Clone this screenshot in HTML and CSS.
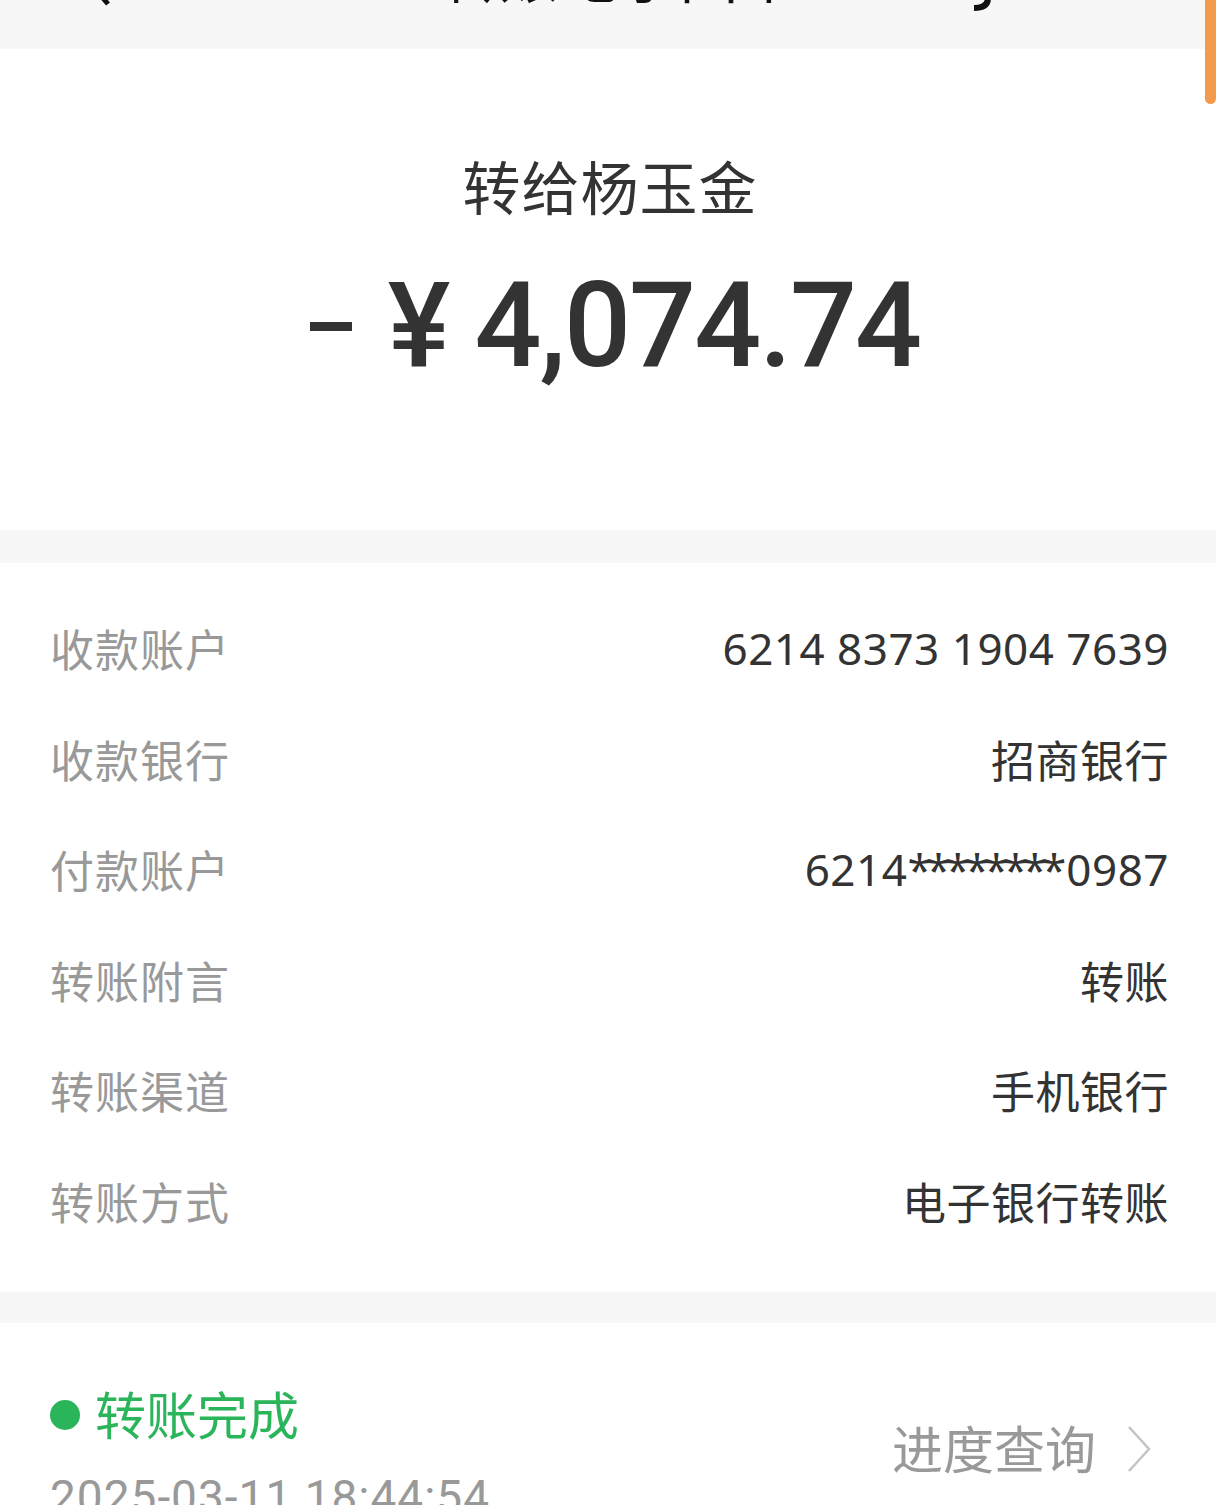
FILE: index.html
```html
<!DOCTYPE html>
<html lang="zh-CN">
<head>
<meta charset="UTF-8">
<title>转账详情</title>
<link rel="stylesheet" href="styles.css">
</head>
<body>
  <div class="topbar">
    <svg class="back" width="40" height="60" viewBox="0 0 40 60"><path d="M30 4 L8 30 L30 56" fill="none" stroke="#111" stroke-width="5"/></svg>
    <div class="title">转账电子回单</div>
    <svg class="more" width="40" height="60" viewBox="0 0 40 60"><path d="M28 20 L28 46 Q28 56 14 56" fill="none" stroke="#111" stroke-width="6"/></svg>
  </div>
  <div class="scroll-thumb"></div>

  <section class="hero">
    <div class="payee">转给杨玉金</div>
    <div class="amount"><span class="minus"></span><span class="yen">¥</span>4,074.74</div>
  </section>

  <div class="gap"></div>

  <section class="details">
    <div class="row"><span class="label">收款账户</span><span class="value">6214 8373 1904 7639</span></div>
    <div class="row"><span class="label">收款银行</span><span class="value">招商银行</span></div>
    <div class="row"><span class="label">付款账户</span><span class="value">6214<span class="mask">********</span>0987</span></div>
    <div class="row"><span class="label">转账附言</span><span class="value">转账</span></div>
    <div class="row"><span class="label">转账渠道</span><span class="value">手机银行</span></div>
    <div class="row"><span class="label">转账方式</span><span class="value">电子银行转账</span></div>
  </section>

  <div class="gap gap-2"></div>

  <section class="status">
    <div class="status-left">
      <div class="state"><span class="dot"></span>转账完成</div>
      <div class="time">2025-03-11 18:44:54</div>
    </div>
    <div class="progress">进度查询
      <svg width="26" height="48" viewBox="0 0 26 48"><path d="M3 2 L23 24 L3 46" fill="none" stroke="#c4c4c4" stroke-width="2.5"/></svg>
    </div>
  </section>
</body>
</html>
```

FILE: styles.css
```css
body {
  margin: 0;
  background: #fff;
  color: #333;
  font-family: "Noto Sans", "Noto Sans CJK SC", sans-serif;
  width: 1216px;
  height: 1505px;
  overflow: hidden;
  position: relative;
}
.topbar {
  height: 49px;
  background: #f7f7f7;
  display: flex;
  align-items: flex-start;
  overflow: hidden;
  padding-left: 78px;
}
.topbar .back { margin-top: -52px; }
.topbar .title {
  margin-top: -56px;
  margin-left: 322px;
  font-size: 58px;
  line-height: 64px;
  color: #111;
  letter-spacing: 2px;
}
.topbar .more { margin-top: -48px; margin-left: 160px; }
.scroll-thumb {
  position: absolute;
  top: 0;
  right: 0;
  width: 11px;
  height: 104px;
  background: #f39a4d;
  border-radius: 0 0 6px 6px;
}
.hero {
  height: 481px;
  display: flex;
  flex-direction: column;
  align-items: center;
}
.payee {
  margin-top: 104px;
  font-size: 58px;
  line-height: 70px;
  color: #333;
  letter-spacing: 1px;
  padding-left: 4px;
}
.amount {
  margin-top: 38px;
  font-family: Roboto, "Noto Sans", sans-serif;
  font-weight: 500;
  font-size: 118px;
  line-height: 130px;
  color: #333;
  display: flex;
  align-items: center;
  letter-spacing: -2px;
  padding-left: 14px;
}
.minus {
  width: 42px;
  height: 9px;
  background: #333;
  margin-right: 36px;
}
.yen { margin-right: 26px; }
.gap {
  height: 33px;
  background: #f7f7f7;
}
.gap-2 { height: 31px; }
.details {
  padding: 30px 47px 36px 50px;
}
.row {
  height: 110.5px;
  display: flex;
  align-items: center;
  justify-content: space-between;
  font-size: 44px;
}
.label { color: #999; letter-spacing: 1px; }
.value { color: #333; letter-spacing: 0.5px; }
.mask { letter-spacing: -5px; margin-right: 5px; }
.status {
  display: flex;
  justify-content: space-between;
  align-items: flex-start;
  padding: 62px 64px 0 50px;
}
.state {
  display: flex;
  align-items: center;
  color: #2bb55b;
  font-size: 51px;
  line-height: 60px;
}
.dot {
  width: 30px;
  height: 30px;
  border-radius: 50%;
  background: #2bb55b;
  margin-right: 15px;
}
.time {
  margin-top: 24px;
  font-size: 46px;
  line-height: 56px;
  color: #999;
  font-family: Roboto, "Noto Sans", sans-serif;
  letter-spacing: 1px;
}
.progress {
  margin-top: 34px;
  display: flex;
  align-items: center;
  color: #999;
  font-size: 51px;
  line-height: 60px;
}
.progress svg { margin-left: 30px; }
```
